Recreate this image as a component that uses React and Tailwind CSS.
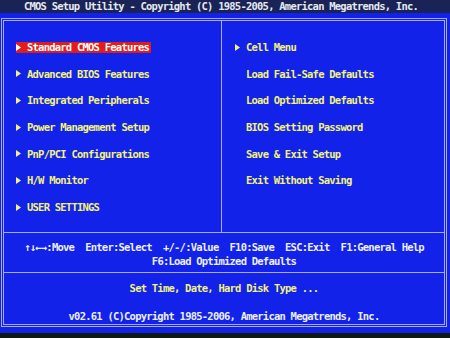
import React from 'react';

const LEFT_ITEMS = [
  'Standard CMOS Features',
  'Advanced BIOS Features',
  'Integrated Peripherals',
  'Power Management Setup',
  'PnP/PCI Configurations',
  'H/W Monitor',
  'USER SETTINGS',
];

const RIGHT_ITEMS = [
  { label: 'Cell Menu', arrow: true },
  { label: 'Load Fail-Safe Defaults' },
  { label: 'Load Optimized Defaults' },
  { label: 'BIOS Setting Password' },
  { label: 'Save & Exit Setup' },
  { label: 'Exit Without Saving' },
];

function Arrow({ color }) {
  return (
    <svg width="5" height="7" viewBox="0 0 5 7" className="shrink-0">
      <polygon points="0,0 5,3.5 0,7" fill={color} />
    </svg>
  );
}

function MenuRow({ label, arrow = true, active = false }) {
  return (
    <div className="h-[26.67px] flex items-center">
      <div
        className={`flex items-center h-[11px] pr-[2px] ${active ? 'bg-[#e01c1c] text-white' : 'text-[#f2f27e]'}`}
      >
        <span className="w-[11px] flex items-center">
          {arrow && <Arrow color={active ? '#ffffff' : '#f2f27e'} />}
        </span>
        <span>{label}</span>
      </div>
    </div>
  );
}

export default function App() {
  return (
    <div
      className="w-[450px] h-[338px] bg-[#0d1912] flex flex-col text-[10.5px] leading-none font-bold tracking-[-0.77px] whitespace-pre"
      style={{ fontFamily: '"DejaVu Sans Mono", "Liberation Mono", monospace' }}
    >
      {/* Title bar */}
      <div className="h-[13px] bg-[#1a2356] text-[#e6e8f0] flex items-center justify-center pr-[8px]">
        CMOS Setup Utility - Copyright (C) 1985-2005, American Megatrends, Inc.
      </div>

      {/* Blue screen */}
      <div className="h-[320px] bg-[#1222e8] pt-[5px] pl-[1px]">
        <div className="w-[446px] h-[309px] border-[3px] border-double border-[#a8acf4] flex flex-col">
          {/* Menus */}
          <div className="h-[212px] flex border-b border-[#a8acf4]">
            <div className="w-[218px] border-r border-[#a8acf4] pt-[13px] pl-[12px]">
              {LEFT_ITEMS.map((item, i) => (
                <MenuRow key={item} label={item} active={i === 0} />
              ))}
            </div>
            <div className="flex-1 pt-[13px] pl-[13px]">
              {RIGHT_ITEMS.map((item) => (
                <MenuRow key={item.label} label={item.label} arrow={!!item.arrow} />
              ))}
            </div>
          </div>

          {/* Key help */}
          <div className="h-[40px] border-b border-[#a8acf4] text-[#eceef8] flex flex-col items-center pt-[9px] gap-[3px]">
            <div>↑↓←→:Move  Enter:Select  +/-/:Value  F10:Save  ESC:Exit  F1:General Help</div>
            <div>F6:Load Optimized Defaults</div>
          </div>

          {/* Status */}
          <div className="flex-1 flex flex-col items-center pt-[10px] gap-[17px]">
            <div className="text-[#f2f27e]">Set Time, Date, Hard Disk Type ...</div>
            <div className="text-[#eceef8]">v02.61 (C)Copyright 1985-2006, American Megatrends, Inc.</div>
          </div>
        </div>
      </div>
    </div>
  );
}
